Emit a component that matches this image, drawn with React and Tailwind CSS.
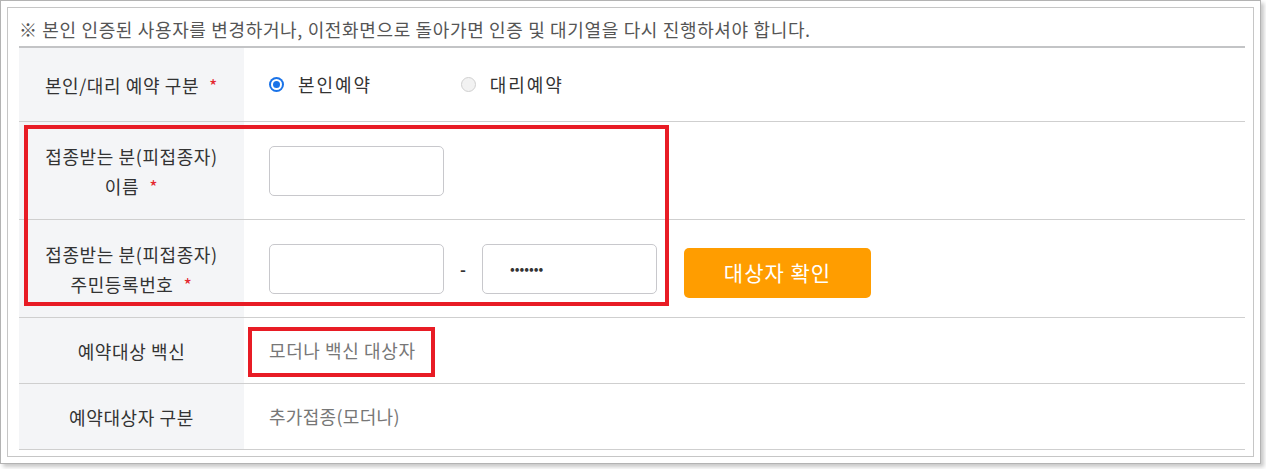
import React from 'react';

function Star() {
  return <span className="ml-[10px] text-[#e4262e]">*</span>;
}

function Row({ h, label, children }) {
  return (
    <div className={`flex border-b border-[#cfcfcf] ${h}`}>
      <div className="w-[225px] shrink-0 bg-[#f4f5f7] flex items-center justify-center text-center text-[18px] tracking-[0.6px] leading-[30px] text-[#333]">
        {label}
      </div>
      <div className="flex-1 flex items-center pl-[25px]">{children}</div>
    </div>
  );
}

function Radio({ checked, label }) {
  return (
    <label className="flex items-center">
      <span
        className={`w-[15px] h-[15px] rounded-full flex items-center justify-center ${
          checked ? 'bg-[#1a73e8]' : 'border border-[#d0d0d0] bg-[#f2f2f2]'
        }`}
      >
        {checked && (
          <span className="w-[11px] h-[11px] rounded-full bg-white flex items-center justify-center">
            <span className="w-[7px] h-[7px] rounded-full bg-[#1a73e8]" />
          </span>
        )}
      </span>
      <span className="ml-[14px] text-[18px] tracking-[1.9px] text-[#333]">{label}</span>
    </label>
  );
}

function Box({ children, className = '' }) {
  return (
    <div className={`w-[175px] h-[50px] border border-[#c8c8cc] rounded-[5px] bg-white flex items-center ${className}`}>
      {children}
    </div>
  );
}

export default function App() {
  return (
    <div className="w-[1266px] h-[469px] bg-white font-['Noto_Sans_CJK_KR','Noto_Sans',sans-serif]">
      <div className="w-[1261px] h-[464px] border border-[#b3b3b3] bg-white p-[6px] shadow-[3px_3px_4px_rgba(0,0,0,0.22)]">
        <div className="relative h-full border border-[#c6c6c6] pl-[11px] pr-[8px]">
          <div className="h-[40px] pt-[8px] text-[18px] tracking-[0.65px] leading-[26px] text-[#555] border-b-2 border-[#c3c4c6]">
            ※ 본인 인증된 사용자를 변경하거나, 이전화면으로 돌아가면 인증 및 대기열을 다시 진행하셔야 합니다.
          </div>

          <Row h="h-[74px]" label={<span>본인/대리 예약 구분<Star /></span>}>
            <Radio checked label="본인예약" />
            <div className="ml-[89px]">
              <Radio label="대리예약" />
            </div>
          </Row>

          <Row
            h="h-[98px]"
            label={
              <span>
                접종받는 분(피접종자)
                <br />
                이름<Star />
              </span>
            }
          >
            <Box />
          </Row>

          <Row
            h="h-[98px]"
            label={
              <span>
                접종받는 분(피접종자)
                <br />
                주민등록번호<Star />
              </span>
            }
          >
            <Box />
            <span className="w-[38px] text-center text-[16px] font-bold text-[#333]">-</span>
            <Box className="pl-[27px]">
              <span className="text-[14px] text-[#333]">•••••••</span>
            </Box>
            <button className="ml-[27px] mt-[8px] w-[187px] h-[50px] rounded-[5px] bg-[#ff9d00] text-white text-[21px] tracking-[1px]">
              대상자 확인
            </button>
          </Row>

          <Row h="h-[66px]" label="예약대상 백신">
            <span className="text-[18px] tracking-[0.6px] text-[#777]">모더나 백신 대상자</span>
          </Row>

          <Row h="h-[66px]" label="예약대상자 구분">
            <span className="text-[18px] tracking-[0.3px] text-[#777]">추가접종(모더나)</span>
          </Row>

          <div className="absolute left-[16px] top-[117px] w-[645px] h-[181px] border-[4px] border-[#e81c25]" />
          <div className="absolute left-[240px] top-[319px] w-[187px] h-[50px] border-[4px] border-[#e81c25]" />
        </div>
      </div>
    </div>
  );
}
